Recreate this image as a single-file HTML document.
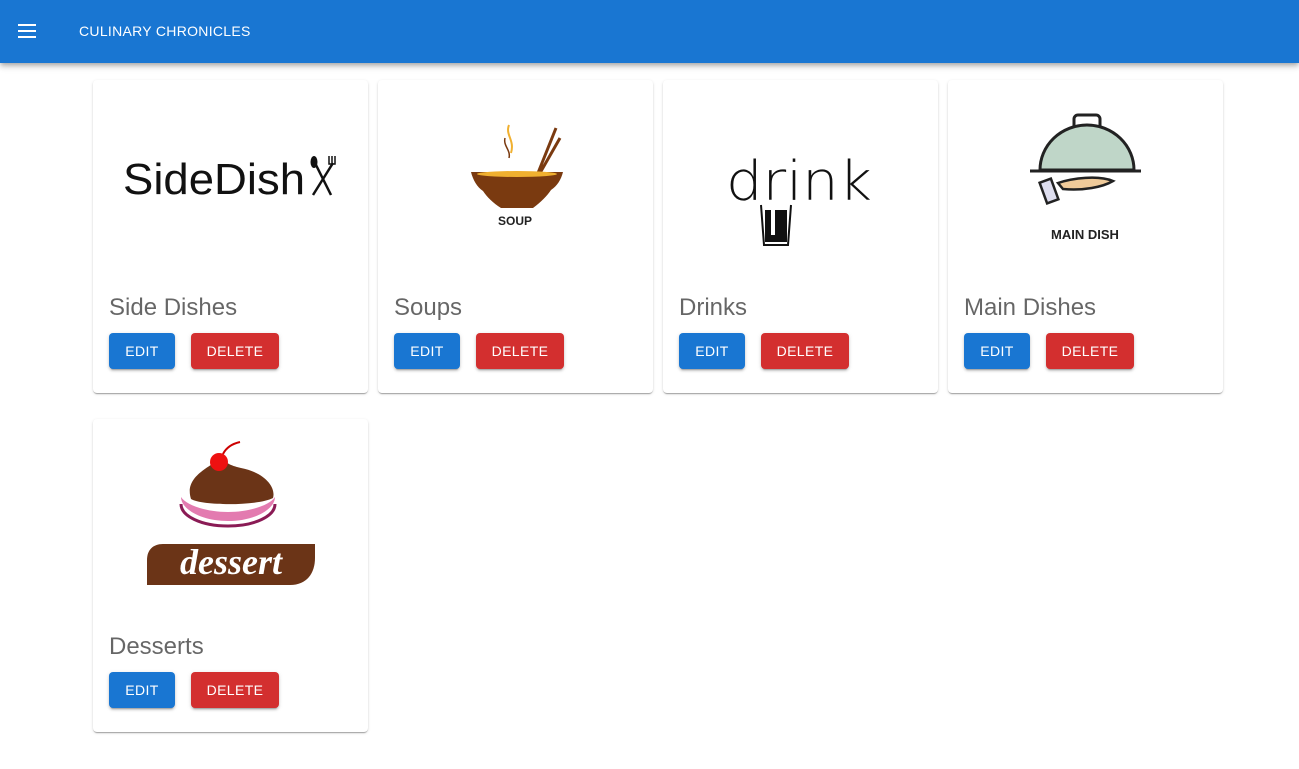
<!DOCTYPE html>
<html><head><meta charset="utf-8"><style>
*{box-sizing:border-box;margin:0;padding:0}
body{width:1299px;height:769px;background:#fff;font-family:"Liberation Sans",Arial,sans-serif;position:relative;overflow:hidden}
.bar{position:absolute;left:0;top:0;width:1299px;height:63px;background:#1976d2;box-shadow:0 2px 4px -1px rgba(0,0,0,.2),0 4px 5px 0 rgba(0,0,0,.14),0 1px 10px 0 rgba(0,0,0,.12);z-index:2}
.ham{position:absolute;left:18px;top:24px;width:18px;height:14px}
.ham i{display:block;height:2px;background:#fff;margin-bottom:4px}
.title{position:absolute;left:79px;top:23px;color:#fff;font-size:14px;letter-spacing:.3px}
.card{position:absolute;width:275px;height:313px;background:#fff;border-radius:4px;box-shadow:0 2px 1px -1px rgba(0,0,0,.2),0 1px 1px 0 rgba(0,0,0,.14),0 1px 3px 0 rgba(0,0,0,.12)}
.card svg{position:absolute;left:0;top:0}
.card h2{position:absolute;left:16px;top:214px;font-weight:400;font-size:24px;color:rgba(0,0,0,.6)}
.btn{position:absolute;top:253px;height:36px;color:#fff;font-size:14px;letter-spacing:.4px;display:flex;align-items:center;justify-content:center;border-radius:4px;box-shadow:0 3px 1px -2px rgba(0,0,0,.2),0 2px 2px 0 rgba(0,0,0,.14),0 1px 5px 0 rgba(0,0,0,.12)}
.e{left:16px;width:66px;background:#1976d2}
.d{left:98px;width:88px;background:#d32f2f}
</style></head><body>
<div class="bar"><div class="ham"><i></i><i></i><i></i></div><div class="title">CULINARY CHRONICLES</div></div>

<div class="card" style="left:93px;top:80px">
<svg width="275" height="200"><text x="30" y="114" font-family="Liberation Sans,sans-serif" font-size="44" fill="#111" textLength="182" lengthAdjust="spacingAndGlyphs">SideDish</text>
<g stroke="#111" stroke-width="2.5" fill="none"><line x1="222" y1="83" x2="238" y2="115"/><line x1="240" y1="83" x2="220" y2="115"/></g><ellipse cx="221" cy="82" rx="3.5" ry="6" fill="#111"/><path d="M236 76v8h6v-8M239 76v8" stroke="#111" stroke-width="1.5" fill="none"/></svg>
<h2>Side Dishes</h2><div class="btn e">EDIT</div><div class="btn d">DELETE</div></div>

<div class="card" style="left:378px;top:80px">
<svg width="275" height="200"><path d="M131 45c-4 10 6 15 2 28" stroke="#f0b030" stroke-width="2" fill="none"/><path d="M127 58c-2 8 6 12 4 20" stroke="#7a3a10" stroke-width="1.5" fill="none"/>
<path d="M178 48l-18 45M182 58l-20 35" stroke="#7a3a10" stroke-width="3"/>
<path d="M93 92h92c-2 8-6 14-12 18-4 6-10 12-18 18h-32c-8-5-14-11-18-17-6-4-10-11-12-19z" fill="#7a3a10"/><ellipse cx="139" cy="94" rx="40" ry="3" fill="#f0b030"/>
<text x="137" y="145" text-anchor="middle" font-family="Liberation Sans,sans-serif" font-weight="700" font-size="12" fill="#222">SOUP</text></svg>
<h2>Soups</h2><div class="btn e">EDIT</div><div class="btn d">DELETE</div></div>

<div class="card" style="left:663px;top:80px">
<svg width="275" height="200"><text x="63" y="120" font-family="DejaVu Sans,sans-serif" font-size="54" fill="#111" font-weight="300" textLength="146" lengthAdjust="spacingAndGlyphs">drink</text>
<path d="M98 125l3 40h24l3-40" stroke="#111" stroke-width="2" fill="#fff"/><rect x="102" y="130" width="22" height="32" fill="#111"/><rect x="108" y="125" width="4" height="30" fill="#fff"/></svg>
<h2>Drinks</h2><div class="btn e">EDIT</div><div class="btn d">DELETE</div></div>

<div class="card" style="left:948px;top:80px">
<svg width="275" height="200"><rect x="126" y="35" width="26" height="16" rx="4" fill="none" stroke="#222" stroke-width="3"/>
<path d="M92 90a47 45 0 0 1 94 0z" fill="#bfd6c8" stroke="#222" stroke-width="3"/><line x1="82" y1="91" x2="193" y2="91" stroke="#222" stroke-width="3"/>
<path d="M110 103c15-5 40-8 55-2-10 6-30 10-50 8z" fill="#f0cb9a" stroke="#222" stroke-width="2.5"/><rect x="95" y="100" width="12" height="22" transform="rotate(-20 101 111)" fill="#dde" stroke="#222" stroke-width="2.5"/>
<text x="137" y="159" text-anchor="middle" font-family="Liberation Sans,sans-serif" font-weight="700" font-size="13" fill="#222">MAIN DISH</text></svg>
<h2>Main Dishes</h2><div class="btn e">EDIT</div><div class="btn d">DELETE</div></div>

<div class="card" style="left:93px;top:419px">
<svg width="275" height="200"><path d="M88 78c0 12 20 24 47 24s47-12 47-24c-5 8-25 15-47 15s-42-7-47-15z" fill="#e37bb0"/><path d="M88 85c0 12 20 22 47 22s47-10 47-22" stroke="#8a1b55" stroke-width="3" fill="none"/>
<path d="M98 80c-8-25 25-33 30-43 4 8 12 10 20 12 25 5 35 20 32 30-15 8-70 8-82 1z" fill="#6b3417"/>
<circle cx="126" cy="43" r="9" fill="#e11"/><path d="M130 35c3-6 8-10 17-12" stroke="#c00" stroke-width="2" fill="none"/>
<path d="M70 125h152v14c0 15-8 27-25 27h-143v-25c0-10 6-16 16-16z" fill="#6b3417"/>
<text x="138" y="155" text-anchor="middle" font-family="Liberation Serif,serif" font-style="italic" font-weight="700" font-size="36" fill="#fff">dessert</text></svg>
<h2>Desserts</h2><div class="btn e">EDIT</div><div class="btn d">DELETE</div></div>
</body></html>
